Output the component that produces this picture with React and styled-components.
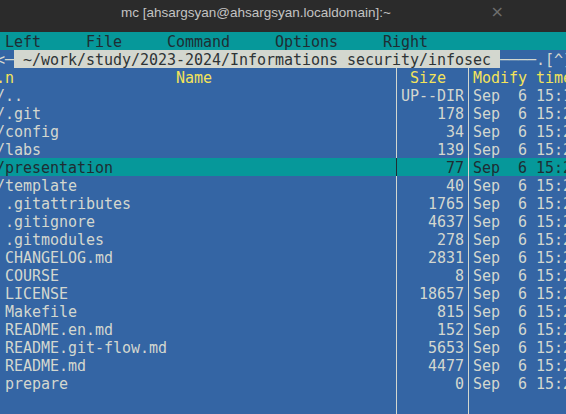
import React from 'react'
import styled, { createGlobalStyle } from 'styled-components'

const GlobalStyle = createGlobalStyle`
  html, body {
    margin: 0;
    padding: 0;
    background: #3465a4;
    overflow: hidden;
  }
`

const files = [
  { name: '/..', size: 'UP--DIR', time: 'Sep  6 15:17' },
  { name: '/.git', size: '178' },
  { name: '/config', size: '34' },
  { name: '/labs', size: '139' },
  { name: '/presentation', size: '77', selected: true },
  { name: '/template', size: '40' },
  { name: ' .gitattributes', size: '1765' },
  { name: ' .gitignore', size: '4637' },
  { name: ' .gitmodules', size: '278' },
  { name: ' CHANGELOG.md', size: '2831' },
  { name: ' COURSE', size: '8' },
  { name: ' LICENSE', size: '18657' },
  { name: ' Makefile', size: '815' },
  { name: ' README.en.md', size: '152' },
  { name: ' README.git-flow.md', size: '5653' },
  { name: ' README.md', size: '4477' },
  { name: ' prepare', size: '0' },
]

const App = () => {
  return (
    <>
      <GlobalStyle />
      <Window>
        <TitleBar>
          <Title>mc [ahsargsyan@ahsargsyan.localdomain]:~</Title>
          <Close>×</Close>
        </TitleBar>
        <Term>
          <MenuBar>{' Left     File     Command     Options     Right'}</MenuBar>
          <BorderRow>
            <span>{'<─'}</span>
            <PathLabel>{' ~/work/study/2023-2024/Informations security/infosec '}</PathLabel>
            <span>{'────.[^]>'}</span>
          </BorderRow>
          <Row>
            <Cell $head>{'.n                  Name'}</Cell>
            <Sep />
            <Cell $head>{' Size'}</Cell>
            <Sep />
            <Cell $head>Modify time</Cell>
          </Row>
          {files.map((f) => (
            <Row key={f.name} $selected={f.selected}>
              <Cell>{f.name}</Cell>
              <Sep $dark={f.selected} />
              <Cell $right>{f.size}</Cell>
              <Sep />
              <Cell>{f.time || 'Sep  6 15:23'}</Cell>
            </Row>
          ))}
          <Row>
            <Cell />
            <Sep />
            <Cell />
            <Sep />
            <Cell />
          </Row>
          <Row>
            <Cell />
            <Sep />
            <Cell />
            <Sep />
            <Cell />
          </Row>
        </Term>
      </Window>
    </>
  )
}

export default App

const Window = styled.div`
  width: 566px;
  height: 414px;
  overflow: hidden;
  display: flex;
  flex-direction: column;
  background: #3465a4;
`
const TitleBar = styled.div`
  height: 32px;
  flex-shrink: 0;
  background: #2b2b2b;
  display: flex;
  align-items: flex-start;
  padding-left: 121px;
  padding-right: 62px;
  box-sizing: border-box;
`
const Title = styled.div`
  flex: 1;
  font-family: "Liberation Sans", "Noto Sans", sans-serif;
  font-size: 13.5px;
  line-height: 25px;
  color: #c3c3c3;
  white-space: nowrap;
`
const Close = styled.div`
  font-family: "DejaVu Sans", sans-serif;
  font-size: 16px;
  line-height: 23px;
  color: #6e6e6e;
`
const Term = styled.div`
  margin-left: -4px;
  font-family: "DejaVu Sans Mono", monospace;
  font-size: 15px;
  letter-spacing: -0.03px;
  line-height: 20px;
  color: #d3d7cf;
  white-space: pre;
`
const MenuBar = styled.div`
  height: 18px;
  overflow: hidden;
  background: #06989a;
  color: #1f2d33;
`
const BorderRow = styled.div`
  height: 18px;
  display: flex;
  overflow: hidden;
`
const PathLabel = styled.span`
  background: #d3d7cf;
  color: #2e3436;
  height: 18px;
`
const Row = styled.div`
  height: 18px;
  display: grid;
  grid-template-columns: 396px 9px 63px 9px 1fr;
  background: ${(p) => (p.$selected ? '#06989a' : 'transparent')};
  color: ${(p) => (p.$selected ? '#1f2d33' : '#d3d7cf')};
`
const Cell = styled.div`
  overflow: hidden;
  color: ${(p) => (p.$head ? '#f3e35a' : 'inherit')};
  text-align: ${(p) => (p.$right ? 'right' : 'left')};
`
const Sep = styled.div`
  position: relative;
  &::before {
    content: '';
    position: absolute;
    left: 4px;
    top: 0;
    bottom: 0;
    width: 1px;
    background: ${(p) => (p.$dark ? '#1f2d33' : '#d3d7cf')};
  }
`
